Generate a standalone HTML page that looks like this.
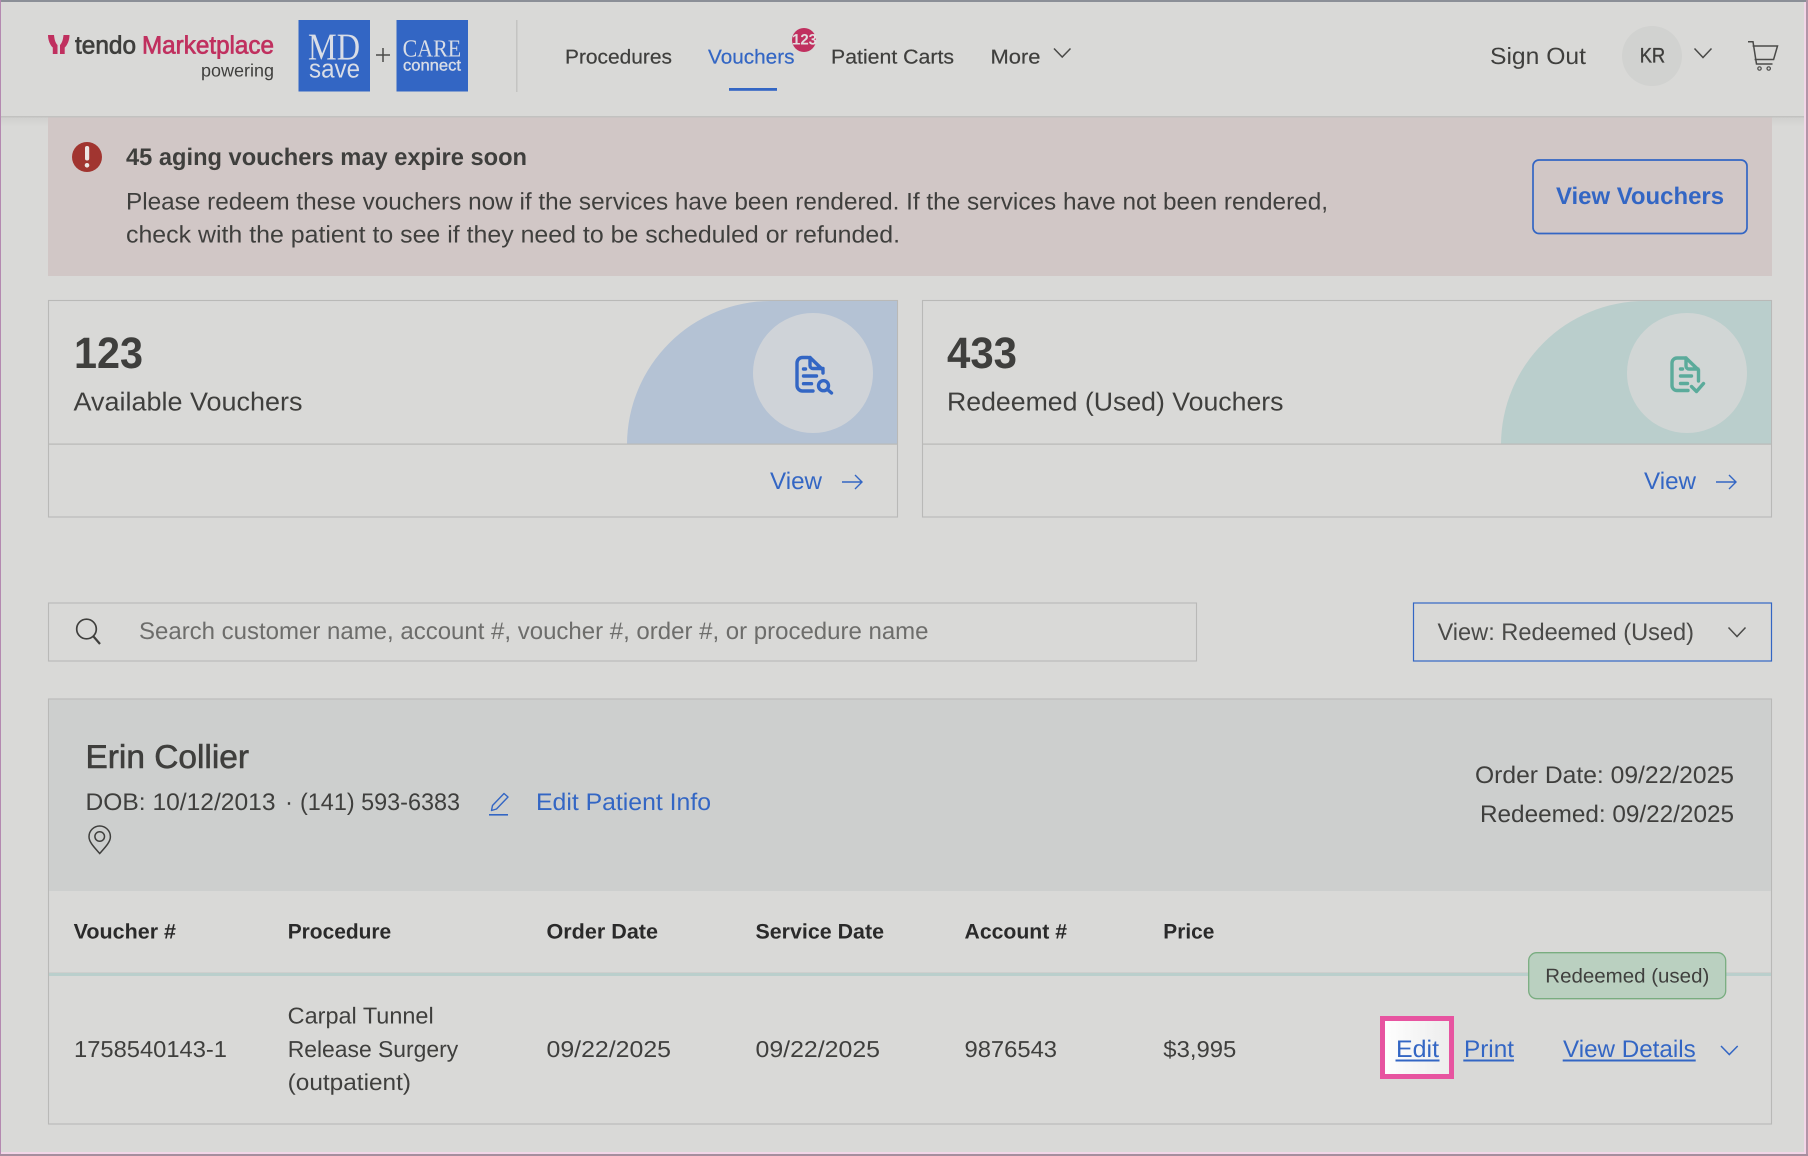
<!DOCTYPE html>
<html><head><meta charset="utf-8"><title>Vouchers</title>
<style>
html,body{margin:0;padding:0;background:#d9d9d7}
svg{display:block}
text{font-family:"Liberation Sans",sans-serif;fill:#3f3f3d;text-rendering:geometricPrecision}
.l{fill:#3366c4}
.b{font-weight:700}
.s{font-family:"Liberation Serif",serif}
</style></head><body>
<svg xmlns="http://www.w3.org/2000/svg" width="1808" height="1156" viewBox="0 0 1808 1156">
<defs><linearGradient id="g" x1="0" x2="1" y1="0" y2="0"><stop offset="0" stop-color="#fff"/><stop offset="1" stop-color="#ececec"/></linearGradient>
<linearGradient id="sh" x1="0" x2="0" y1="0" y2="1"><stop offset="0" stop-color="#d0d0ce"/><stop offset="1" stop-color="#d9d9d7"/></linearGradient></defs>
<rect width="1808" height="1156" fill="#d9d9d7"/>
<rect x="0" y="117" width="1808" height="10" fill="url(#sh)"/>
<!-- alert -->
<rect x="48" y="117" width="1724" height="159" fill="#d1c7c6"/>
<circle cx="87" cy="157" r="15" fill="#a13530"/>
<rect x="85" y="146" width="4.2" height="14.5" rx="2" fill="#ece6e4"/><circle cx="87" cy="165.3" r="2.3" fill="#ece6e4"/>
<text class="b" x="126" y="165" font-size="24" textLength="401" lengthAdjust="spacingAndGlyphs">45 aging vouchers may expire soon</text>
<text x="126" y="209.3" font-size="24" textLength="1202" lengthAdjust="spacingAndGlyphs">Please redeem these vouchers now if the services have been rendered. If the services have not been rendered,</text>
<text x="126" y="242.7" font-size="24" textLength="774" lengthAdjust="spacingAndGlyphs">check with the patient to see if they need to be scheduled or refunded.</text>
<rect x="1533" y="160" width="214" height="73.5" rx="6" fill="none" stroke="#3366c4" stroke-width="1.7"/>
<text class="b l" x="1556" y="204" font-size="24" textLength="168" lengthAdjust="spacingAndGlyphs">View Vouchers</text>
<!-- header -->
<rect x="0" y="0" width="1808" height="116" fill="#d9d9d7"/>
<rect x="0" y="116" width="1808" height="1.5" fill="#c2c2c0"/>
<path d="M48 35H54C54.5 40 55.5 43 57.5 45V54H52.8V47.5C50 45 48 40 48 35ZM69.5 35H63.5C63 40 62 43 60 45V54H64.7V47.5C67.5 45 69.5 40 69.5 35Z" fill="#c0305f"/>
<text x="75" y="53.3" font-size="25" textLength="61" lengthAdjust="spacingAndGlyphs" stroke="#3f3f3d" stroke-width=".7">tendo</text>
<text x="142" y="53.3" font-size="25" textLength="132" lengthAdjust="spacingAndGlyphs" style="fill:#c0305f" stroke="#c0305f" stroke-width=".7">Marketplace</text>
<text x="201" y="76.7" font-size="18" textLength="73" lengthAdjust="spacingAndGlyphs">powering</text>
<rect x="298.5" y="20" width="71.5" height="71.5" fill="#3366c4"/>
<text class="s" x="308" y="59.3" font-size="38" textLength="52" lengthAdjust="spacingAndGlyphs" style="fill:#d9dde6">MD</text>
<text x="309" y="77.7" font-size="26" textLength="51" lengthAdjust="spacingAndGlyphs" style="fill:#d9dde6">save</text>
<path d="M383 48V62M376 55H390" stroke="#4a4a48" stroke-width="1.5" fill="none"/>
<rect x="396.5" y="20" width="71.5" height="71.5" fill="#3366c4"/>
<text class="s" x="402.6" y="56.7" font-size="24.5" textLength="58.5" lengthAdjust="spacingAndGlyphs" style="fill:#d9dde6">CARE</text>
<text x="403" y="70.5" font-size="16" textLength="58" lengthAdjust="spacingAndGlyphs" style="fill:#d9dde6" stroke="#d9dde6" stroke-width=".35">connect</text>
<rect x="516" y="20" width="1.5" height="72" fill="#c4c4c2"/>
<text x="565" y="63.5" font-size="20" textLength="107" lengthAdjust="spacingAndGlyphs" stroke="#3f3f3d" stroke-width=".2">Procedures</text>
<text class="l" x="708" y="63.5" font-size="20" textLength="86.5" lengthAdjust="spacingAndGlyphs" stroke="#3366c4" stroke-width=".2">Vouchers</text>
<rect x="729" y="88" width="48" height="2.8" fill="#3366c4"/>
<circle cx="804" cy="40" r="12" fill="#c0305f"/>
<text class="b" x="792" y="44.5" font-size="15" textLength="25" lengthAdjust="spacingAndGlyphs" style="fill:#e3dfe0">123</text>
<text x="831" y="63.5" font-size="20" textLength="123" lengthAdjust="spacingAndGlyphs" stroke="#3f3f3d" stroke-width=".2">Patient Carts</text>
<text x="990.5" y="63.5" font-size="20" textLength="50" lengthAdjust="spacingAndGlyphs" stroke="#3f3f3d" stroke-width=".2">More</text>
<path d="M1054 48.5L1062.2 57L1070.5 48.5" fill="none" stroke="#4a4a48" stroke-width="1.5"/>
<text x="1490" y="64" font-size="23.5" textLength="96" lengthAdjust="spacingAndGlyphs">Sign Out</text>
<circle cx="1652" cy="56" r="30" fill="#d1d2d0"/>
<text x="1639.7" y="62.7" font-size="21" textLength="25.5" lengthAdjust="spacingAndGlyphs" stroke="#3f3f3d" stroke-width=".35">KR</text>
<path d="M1694.5 48.5L1703 57.5L1711.5 48.5" fill="none" stroke="#4a4a48" stroke-width="1.5"/>
<path d="M1748 41.7H1753L1756.5 64H1772.5M1752.6 46H1777.5L1773.6 59.5H1754.6" fill="none" stroke="#4a4a48" stroke-width="1.5"/>
<circle cx="1759.5" cy="68.5" r="1.7" fill="none" stroke="#4a4a48" stroke-width="1.2"/><circle cx="1768.7" cy="68.5" r="1.7" fill="none" stroke="#4a4a48" stroke-width="1.2"/>
<!-- card 1 -->
<rect x="48.5" y="300.5" width="849" height="216.5" fill="#d9d9d7" stroke="#b9b9b7" stroke-width="1.1"/>
<path d="M627 444A144 144 0 0 1 771 301H897V444Z" fill="#b4c2d4"/>
<circle cx="813" cy="373" r="60" fill="#cfd3d8"/>
<rect x="48" y="443.5" width="850" height="1.2" fill="#b9b9b7"/>
<g fill="none" stroke="#3366c4" stroke-width="3.4" stroke-linecap="round" stroke-linejoin="round">
<path d="M808 357.5H802.5A5.5 5.5 0 0 0 797 363V385.5A5.5 5.5 0 0 0 802.5 391H813"/>
<path d="M810 357.5L823 370V373M810 357.5V365.5A3 3 0 0 0 813 368.5H823"/>
<path d="M803.5 369H805.5M803.5 376H816.5M803.5 383.7H811.5"/>
<circle cx="823.5" cy="385.7" r="5"/><path d="M827.5 389.5L831.5 393"/>
</g>
<text x="74" y="368" font-size="44" textLength="69" lengthAdjust="spacingAndGlyphs" class="b">123</text>
<text x="73.5" y="410.6" font-size="26" textLength="229" lengthAdjust="spacingAndGlyphs">Available Vouchers</text>
<text class="l" x="770" y="489" font-size="24" textLength="52" lengthAdjust="spacingAndGlyphs">View</text>
<path d="M842 482H862M855 475L862 482L855 489" fill="none" stroke="#3366c4" stroke-width="1.4"/>
<!-- card 2 -->
<rect x="922.5" y="300.5" width="849" height="216.5" fill="#d9d9d7" stroke="#b9b9b7" stroke-width="1.1"/>
<path d="M1501 444A144 144 0 0 1 1645 301H1771V444Z" fill="#bacecc"/>
<circle cx="1687" cy="373" r="60" fill="#d1d6d5"/>
<rect x="922" y="443.5" width="850" height="1.2" fill="#b9b9b7"/>
<g fill="none" stroke="#5bab9b" stroke-width="3.4" stroke-linecap="round" stroke-linejoin="round">
<path d="M1685 358H1677A5 5 0 0 0 1672 363V385.5A5 5 0 0 0 1677 390.5H1688"/>
<path d="M1686 358L1698.5 370V381M1686 358V366A3 3 0 0 0 1689 369H1698"/>
<path d="M1680.5 369H1682.5M1680.5 376H1691.5M1680.5 383.5H1687.5"/>
<path d="M1691.5 386.5L1696.5 391.5L1703.5 383.5"/>
</g>
<text x="947" y="368" font-size="44" textLength="70" lengthAdjust="spacingAndGlyphs" class="b">433</text>
<text x="947" y="410.6" font-size="26" textLength="336.5" lengthAdjust="spacingAndGlyphs">Redeemed (Used) Vouchers</text>
<text class="l" x="1644" y="489" font-size="24" textLength="52" lengthAdjust="spacingAndGlyphs">View</text>
<path d="M1716 482H1736M1729 475L1736 482L1729 489" fill="none" stroke="#3366c4" stroke-width="1.4"/>
<!-- search -->
<rect x="48.5" y="603" width="1148" height="58" fill="#d9d9d7" stroke="#b9b9b7" stroke-width="1.1"/>
<circle cx="86.5" cy="629" r="9.8" fill="none" stroke="#3f3f3d" stroke-width="1.7"/>
<path d="M93.5 636.5L100 644" stroke="#3f3f3d" stroke-width="2.2" fill="none"/>
<text x="139" y="639" font-size="24" textLength="789.5" lengthAdjust="spacingAndGlyphs" style="fill:#6d6d6b">Search customer name, account #, voucher #, order #, or procedure name</text>
<rect x="1413.5" y="603" width="358" height="58" fill="#d9d9d7" stroke="#3366c4" stroke-width="1.2"/>
<text x="1437.5" y="640" font-size="24" textLength="256.5" lengthAdjust="spacingAndGlyphs" style="fill:#4a4a48">View: Redeemed (Used)</text>
<path d="M1728.5 627.5L1737 636.5L1745.5 627.5" fill="none" stroke="#4a4a48" stroke-width="1.5"/>
<!-- patient -->
<rect x="48.5" y="699" width="1723" height="425" fill="#d9d9d7" stroke="#b9b9b7" stroke-width="1.1"/>
<rect x="49" y="699.6" width="1722" height="191.4" fill="#cdcfce"/>
<text x="85.5" y="768" font-size="33" textLength="163.5" lengthAdjust="spacingAndGlyphs" stroke="#3f3f3d" stroke-width=".6">Erin Collier</text>
<text x="85.5" y="810" font-size="24" textLength="190" lengthAdjust="spacingAndGlyphs">DOB: 10/12/2013</text>
<text x="285" y="810" font-size="24">·</text>
<text x="300" y="810" font-size="24" textLength="160" lengthAdjust="spacingAndGlyphs">(141) 593-6383</text>
<path d="M491.5 810.5L492.5 805.5L504 793.5L508 797L496.5 809Z" fill="none" stroke="#3366c4" stroke-width="1.4" stroke-linejoin="round"/>
<rect x="489" y="814" width="19" height="1.6" fill="#3366c4"/>
<text class="l" x="536" y="810" font-size="24" textLength="175" lengthAdjust="spacingAndGlyphs">Edit Patient Info</text>
<path d="M99.7 853.5C94 847 89 842 89 836.7A10.7 10.7 0 0 1 110.4 836.7C110.4 842 105.4 847 99.7 853.5Z" fill="none" stroke="#3f3f3d" stroke-width="1.5"/>
<circle cx="99.7" cy="836.5" r="4.8" fill="none" stroke="#3f3f3d" stroke-width="1.5"/>
<text x="1475" y="783" font-size="24" textLength="259" lengthAdjust="spacingAndGlyphs">Order Date: 09/22/2025</text>
<text x="1480" y="822" font-size="24" textLength="254" lengthAdjust="spacingAndGlyphs">Redeemed: 09/22/2025</text>
<text class="b" x="73.7" y="938.6" font-size="21" textLength="102.3" lengthAdjust="spacingAndGlyphs" style="fill:#2a2a2a">Voucher #</text>
<text class="b" x="287.7" y="938.6" font-size="21" textLength="103.5" lengthAdjust="spacingAndGlyphs" style="fill:#2a2a2a">Procedure</text>
<text class="b" x="546.5" y="938.6" font-size="21" textLength="111.5" lengthAdjust="spacingAndGlyphs" style="fill:#2a2a2a">Order Date</text>
<text class="b" x="755.5" y="938.6" font-size="21" textLength="128.5" lengthAdjust="spacingAndGlyphs" style="fill:#2a2a2a">Service Date</text>
<text class="b" x="964.5" y="938.6" font-size="21" textLength="102.5" lengthAdjust="spacingAndGlyphs" style="fill:#2a2a2a">Account #</text>
<text class="b" x="1163.3" y="938.6" font-size="21" textLength="51" lengthAdjust="spacingAndGlyphs" style="fill:#2a2a2a">Price</text>
<rect x="49" y="972" width="1722" height="1.2" fill="#cfcfcd"/>
<rect x="49" y="973" width="1722" height="3" fill="#bacfcc"/>
<text x="74" y="1056.9" font-size="23" textLength="153" lengthAdjust="spacingAndGlyphs">1758540143-1</text>
<text x="287.7" y="1023.5" font-size="23" textLength="146" lengthAdjust="spacingAndGlyphs">Carpal Tunnel</text>
<text x="287.7" y="1056.9" font-size="23" textLength="170.5" lengthAdjust="spacingAndGlyphs">Release Surgery</text>
<text x="287.7" y="1090.2" font-size="23" textLength="123.3" lengthAdjust="spacingAndGlyphs">(outpatient)</text>
<text x="546.5" y="1056.9" font-size="23" textLength="124.5" lengthAdjust="spacingAndGlyphs">09/22/2025</text>
<text x="755.5" y="1056.9" font-size="23" textLength="124.5" lengthAdjust="spacingAndGlyphs">09/22/2025</text>
<text x="964.5" y="1056.9" font-size="23" textLength="92.5" lengthAdjust="spacingAndGlyphs">9876543</text>
<text x="1163.3" y="1056.9" font-size="23" textLength="73" lengthAdjust="spacingAndGlyphs">$3,995</text>
<rect x="1528.7" y="952.7" width="197" height="46" rx="8" fill="#bad0c0" stroke="#79ad80" stroke-width="1.3"/>
<text x="1545.3" y="982.7" font-size="20" textLength="164" lengthAdjust="spacingAndGlyphs">Redeemed (used)</text>
<rect x="1382.5" y="1018.5" width="69" height="58" fill="url(#g)" stroke="#e754a0" stroke-width="5"/>
<text class="l" x="1396" y="1056.9" font-size="24" textLength="43" lengthAdjust="spacingAndGlyphs">Edit</text>
<rect x="1395.5" y="1059.5" width="44" height="2" fill="#3366c4"/>
<text class="l" x="1464" y="1056.9" font-size="24" textLength="50" lengthAdjust="spacingAndGlyphs">Print</text>
<rect x="1463.3" y="1059.5" width="50.7" height="2" fill="#3366c4"/>
<text class="l" x="1563" y="1056.9" font-size="24" textLength="132.7" lengthAdjust="spacingAndGlyphs">View Details</text>
<rect x="1562.7" y="1059.5" width="133" height="2" fill="#3366c4"/>
<path d="M1721 1046L1729.3 1054.5L1737.7 1046" fill="none" stroke="#3366c4" stroke-width="1.5"/>
<!-- frame -->
<rect x="0" y="0" width="1808" height="2" fill="#8b8f97"/>
<rect x="0" y="0" width="1" height="1156" fill="#b489b0"/>
<rect x="1804" y="2" width="2" height="1152" fill="#f3d5e7"/>
<rect x="1806" y="0" width="2" height="1156" fill="#b295a8"/>
<rect x="1" y="1152" width="1805" height="2" fill="#f3d5e7"/>
<rect x="0" y="1154" width="1808" height="2" fill="#a58e9e"/>
</svg>
</body></html>
